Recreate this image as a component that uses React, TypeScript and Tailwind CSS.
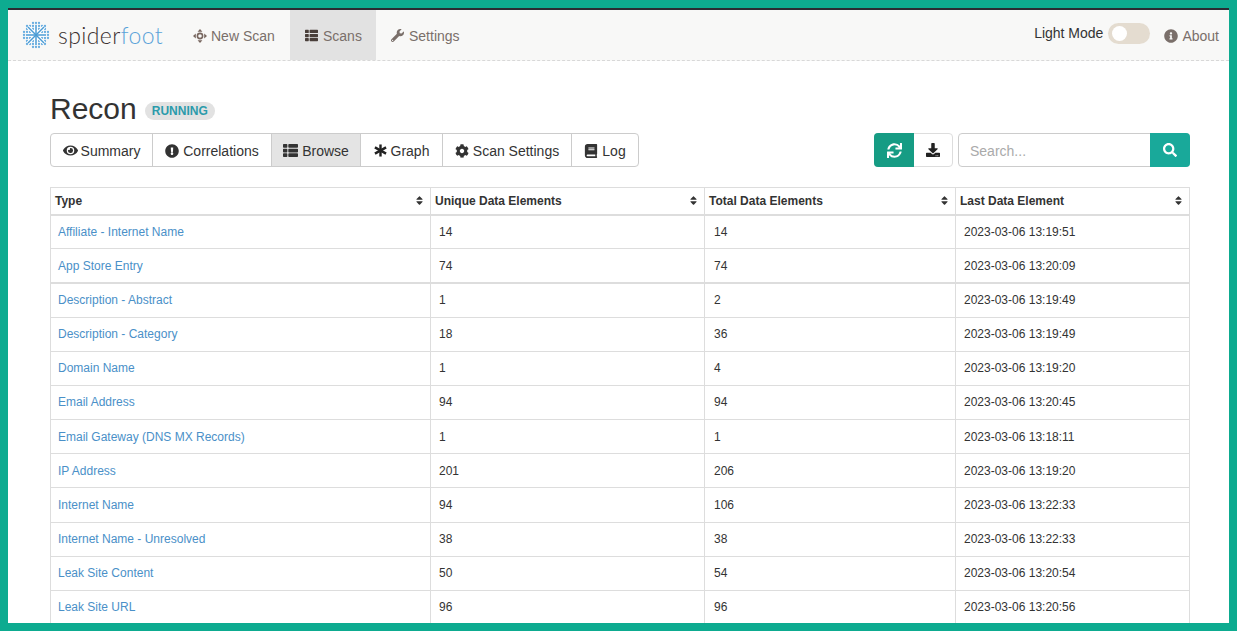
import {
  FaBook,
  FaCog,
  FaDownload,
  FaExclamationCircle,
  FaEye,
  FaInfoCircle,
  FaSearch,
  FaSort,
  FaSync,
  FaThList,
  FaWrench,
} from "react-icons/fa";

const rows = [
  ["Affiliate - Internet Name", "14", "14", "2023-03-06 13:19:51"],
  ["App Store Entry", "74", "74", "2023-03-06 13:20:09"],
  ["Description - Abstract", "1", "2", "2023-03-06 13:19:49"],
  ["Description - Category", "18", "36", "2023-03-06 13:19:49"],
  ["Domain Name", "1", "4", "2023-03-06 13:19:20"],
  ["Email Address", "94", "94", "2023-03-06 13:20:45"],
  ["Email Gateway (DNS MX Records)", "1", "1", "2023-03-06 13:18:11"],
  ["IP Address", "201", "206", "2023-03-06 13:19:20"],
  ["Internet Name", "94", "106", "2023-03-06 13:22:33"],
  ["Internet Name - Unresolved", "38", "38", "2023-03-06 13:22:33"],
  ["Leak Site Content", "50", "54", "2023-03-06 13:20:54"],
  ["Leak Site URL", "96", "96", "2023-03-06 13:20:56"],
];

function HeavyAsterisk() {
  return (
    <svg width="13" height="13" viewBox="-7 -7 14 14" fill="none" stroke="#222" strokeWidth="2.6">
      <line x1="0" y1="-6.5" x2="0" y2="6.5" />
      <line x1="-6" y1="-3.4" x2="6" y2="3.4" />
      <line x1="-6" y1="3.4" x2="6" y2="-3.4" />
    </svg>
  );
}

function ScreenshotIcon() {
  return (
    <svg width="14" height="14" viewBox="-7 -7 14 14" fill="#77665f" className="shrink-0">
      <circle cx="0" cy="0" r="2.6" fill="none" stroke="#77665f" strokeWidth="1.6" />
      <path d="M0-7 2.4-4.2H-2.4Z" />
      <path d="M0 7 2.4 4.2H-2.4Z" />
      <path d="M-7 0-4.2-2.4V2.4Z" />
      <path d="M7 0 4.2-2.4V2.4Z" />
    </svg>
  );
}

const tabs = [
  { label: "Summary", icon: <FaEye className="-mr-px text-[15px]" />, w: "w-[101px]" },
  { label: "Correlations", icon: <FaExclamationCircle className="text-[14px]" />, w: "w-[119px]" },
  { label: "Browse", icon: <FaThList className="text-[15px]" />, w: "w-[89px]", active: true },
  { label: "Graph", icon: <HeavyAsterisk />, w: "w-[82px]" },
  { label: "Scan Settings", icon: <FaCog className="text-[14px]" />, w: "w-[129px]" },
  { label: "Log", icon: <FaBook className="text-[14px]" />, w: "w-[67px]" },
];

function Logo() {
  const grid = [-12, -9, -6, -3, 0, 3, 6, 9, 12];
  return (
    <svg width="28" height="28" viewBox="-14 -14 28 28" className="shrink-0">
      {grid.map((x) =>
        grid.map((y) =>
          x * x + y * y <= 170 ? (
            <circle key={`${x}_${y}`} cx={x} cy={y} r="1.15" fill="#6aaee0" />
          ) : null,
        ),
      )}
      <g stroke="#fff" strokeWidth="3.4">
        <line x1="-8" y1="-8" x2="8" y2="8" />
        <line x1="-8" y1="8" x2="8" y2="-8" />
        <line x1="0" y1="-10" x2="0" y2="10" />
        <line x1="-10" y1="0" x2="10" y2="0" />
      </g>
      <g stroke="#4a9bd4" strokeWidth="1.5">
        <line x1="-8" y1="-8" x2="8" y2="8" />
        <line x1="-8" y1="8" x2="8" y2="-8" />
        <line x1="0" y1="-10" x2="0" y2="10" />
        <line x1="-10" y1="0" x2="10" y2="0" />
      </g>
    </svg>
  );
}

function Th({ label, w }: { label: string; w: string }) {
  return (
    <th className={`${w} h-[27px] border border-b-2 border-[#ddd] px-1 text-left font-bold text-[#333]`}>
      <div className="flex items-center justify-between">
        <span>{label}</span>
        <FaSort className="mr-px text-[11px]" />
      </div>
    </th>
  );
}

export default function App() {
  return (
    <div className="h-screen overflow-hidden border-8 border-[#0dab90] bg-white font-['Liberation_Sans',sans-serif] text-[#333]">
      <div className="h-[2px] bg-[#2b2b33]" />
      {/* Navbar */}
      <nav className="flex h-[51px] items-stretch justify-between border-b border-dashed border-[#d8d8d8] bg-[#f8f8f7] text-sm text-[#7a6f6a]">
        <div className="flex items-stretch">
          <div className="flex w-[175px] items-center pl-[14px]">
            <Logo />
            <span className="ml-2 font-['Lato',sans-serif] text-[23px] font-light tracking-[0.4px] text-[#3a3030]">
              spider<span className="text-[#5ba3d9]">foot</span>
            </span>
          </div>
          <a className="flex w-[107px] items-center gap-1 pl-[10px] pt-px">
            <ScreenshotIcon /> New Scan
          </a>
          <a className="flex w-[86px] items-center gap-[5px] bg-[#e2e2e2] pl-[15px] pt-px">
            <FaThList className="text-[13px] text-[#4a3f3a]" /> Scans
          </a>
          <a className="flex items-center gap-[5px] pl-[15px] pt-px">
            <FaWrench className="text-[13px]" /> Settings
          </a>
        </div>
        <div className="flex items-center pr-[10px]">
          <span className="mb-1 text-[#333]">Light Mode</span>
          <span className="mb-1 ml-[5px] flex h-[21px] w-[42px] items-center rounded-full bg-[#e4dcd0] pl-1">
            <span className="h-[15px] w-[15px] rounded-full bg-white" />
          </span>
          <a className="ml-[14px] flex items-center gap-1 pt-px">
            <FaInfoCircle className="text-[14px]" /> About
          </a>
        </div>
      </nav>

      <main className="pl-[42px] pr-[39px]">
        <div className="mt-[30px] flex items-center">
          <h1 className="text-[30px] leading-[36px] text-[#333]">Recon</h1>
          <span className="ml-[8px] mt-1 rounded-full bg-[#e2e2e2] px-[7px] py-[2px] text-[12px] font-bold leading-[14px] text-[#2b9bab]">
            RUNNING
          </span>
        </div>

        <div className="mt-[6px] flex items-center justify-between">
          <div className="flex h-[34px] rounded border border-[#ccc] text-sm">
            {tabs.map((t, i) => (
              <div
                key={t.label}
                className={`flex ${t.w} items-center justify-center gap-1 pt-px ${i > 0 ? "border-l border-[#ccc]" : ""} ${t.active ? "bg-[#e4e4e4]" : ""}`}
              >
                {t.icon}
                {t.label}
              </div>
            ))}
          </div>
          <div className="flex">
            <div className="flex h-[34px] w-[79px] rounded border border-[#ddd]">
              <div className="-m-px flex w-10 items-center justify-center rounded-l bg-[#169c84] text-white">
                <FaSync className="text-[15px]" />
              </div>
              <div className="flex flex-1 items-center justify-center text-[#222]">
                <FaDownload className="text-sm" />
              </div>
            </div>
            <div className="ml-[5px] flex h-[34px] w-[232px] rounded border border-[#ccc]">
              <div className="flex-1 pl-[11px] text-sm leading-[34px] text-[#aaa]">Search...</div>
              <div className="-m-px flex w-10 items-center justify-center rounded-r bg-[#19a99a] text-white">
                <FaSearch className="text-sm" />
              </div>
            </div>
          </div>
        </div>

        <table className="mt-[20px] w-[1139px] table-fixed border-collapse text-xs">
          <thead>
            <tr>
              <Th label="Type" w="w-[380px]" />
              <Th label="Unique Data Elements" w="w-[274px]" />
              <Th label="Total Data Elements" w="w-[251px]" />
              <Th label="Last Data Element" w="w-[234px]" />
            </tr>
          </thead>
          <tbody>
            {rows.map((r, i) => (
              <tr key={r[0]} className={i === 1 ? "border-b-2 border-[#ddd]" : ""}>
                <td className="h-[34.18px] border border-[#ddd] pl-[7px] pr-2 text-[#4a90c8]">{r[0]}</td>
                <td className="border border-[#ddd] px-2">{r[1]}</td>
                <td className="border border-[#ddd] pl-[9px] pr-2">{r[2]}</td>
                <td className="border border-[#ddd] px-2">{r[3]}</td>
              </tr>
            ))}
          </tbody>
        </table>
      </main>
    </div>
  );
}
